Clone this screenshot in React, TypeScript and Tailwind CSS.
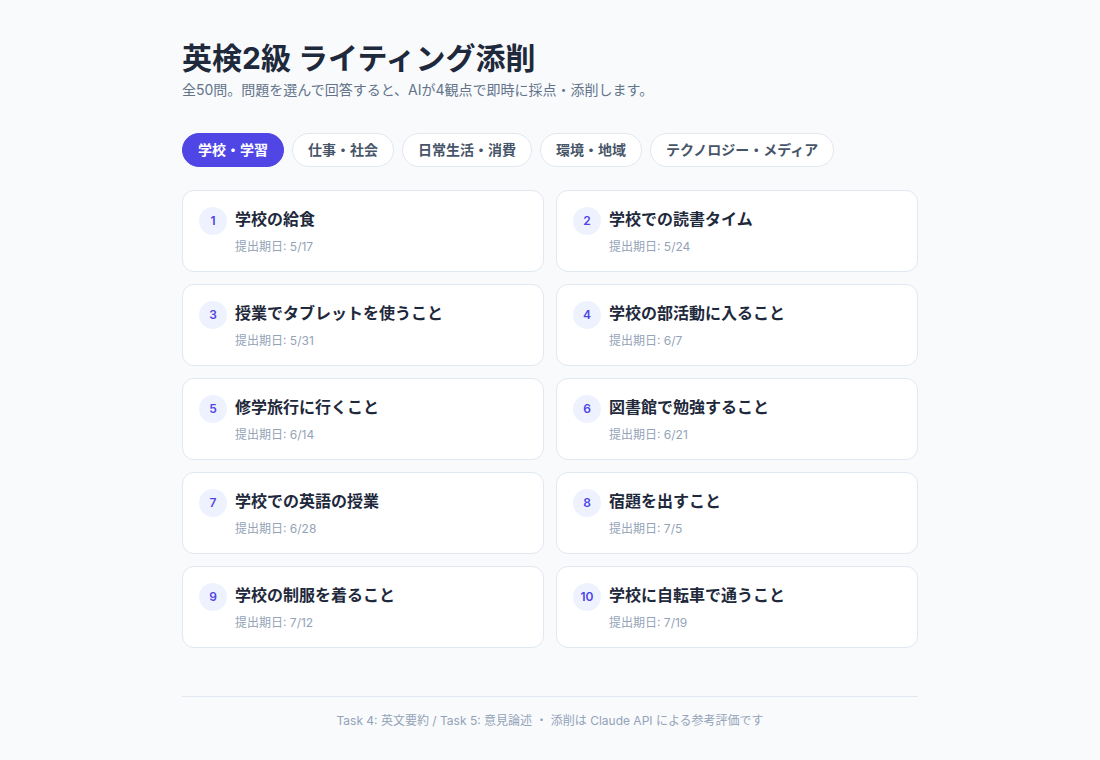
import React from "react";

const tabs = ["学校・学習", "仕事・社会", "日常生活・消費", "環境・地域", "テクノロジー・メディア"];

const items = [
  { n: 1, t: "学校の給食", d: "5/17" },
  { n: 2, t: "学校での読書タイム", d: "5/24" },
  { n: 3, t: "授業でタブレットを使うこと", d: "5/31" },
  { n: 4, t: "学校の部活動に入ること", d: "6/7" },
  { n: 5, t: "修学旅行に行くこと", d: "6/14" },
  { n: 6, t: "図書館で勉強すること", d: "6/21" },
  { n: 7, t: "学校での英語の授業", d: "6/28" },
  { n: 8, t: "宿題を出すこと", d: "7/5" },
  { n: 9, t: "学校の制服を着ること", d: "7/12" },
  { n: 10, t: "学校に自転車で通うこと", d: "7/19" },
];

export default function App() {
  return (
    <div
      className="min-h-screen bg-[#f8fafc] text-[#1e293b]"
      style={{ fontFamily: 'Inter, "Noto Sans CJK JP", sans-serif' }}
    >
      <div className="mx-auto max-w-3xl px-4 pt-10 pb-6">
        <h1 className="text-3xl font-bold leading-9 text-[#1e293b]">英検2級 ライティング添削</h1>
        <p className="mt-1 text-sm leading-5 text-[#64748b]">
          全50問。問題を選んで回答すると、AIが4観点で即時に採点・添削します。
        </p>

        <div className="mt-[33px] flex flex-wrap gap-2">
          {tabs.map((t, i) => (
            <button
              key={t}
              className={
                i === 0
                  ? "rounded-full border border-[#4f46e5] bg-[#4f46e5] px-[15px] py-1.5 text-sm font-semibold leading-5 text-white"
                  : "rounded-full border border-[#e2e8f0] bg-white px-[15px] py-1.5 text-sm font-semibold leading-5 text-[#475569]"
              }
            >
              {t}
            </button>
          ))}
        </div>

        <div className="mt-[23px] grid grid-cols-2 gap-3">
          {items.map((it) => (
            <div
              key={it.n}
              className="flex items-start gap-2 rounded-xl border border-[#e2e8f0] bg-white p-4"
            >
              <div className="flex h-7 w-7 shrink-0 items-center justify-center rounded-full bg-[#eef2ff] text-xs font-semibold text-[#4f46e5]">
                {it.n}
              </div>
              <div>
                <div className="text-base font-semibold leading-6 text-[#1e293b]">{it.t}</div>
                <div className="mt-2 text-xs leading-4 text-[#94a3b8]">提出期日: {it.d}</div>
              </div>
            </div>
          ))}
        </div>

        <div className="mt-12 border-t border-[#e2e8f0] pt-4 text-center text-xs leading-4 text-[#94a3b8]">
          Task 4: 英文要約 / Task 5: 意見論述 ・ 添削は Claude API による参考評価です
        </div>
      </div>
    </div>
  );
}
